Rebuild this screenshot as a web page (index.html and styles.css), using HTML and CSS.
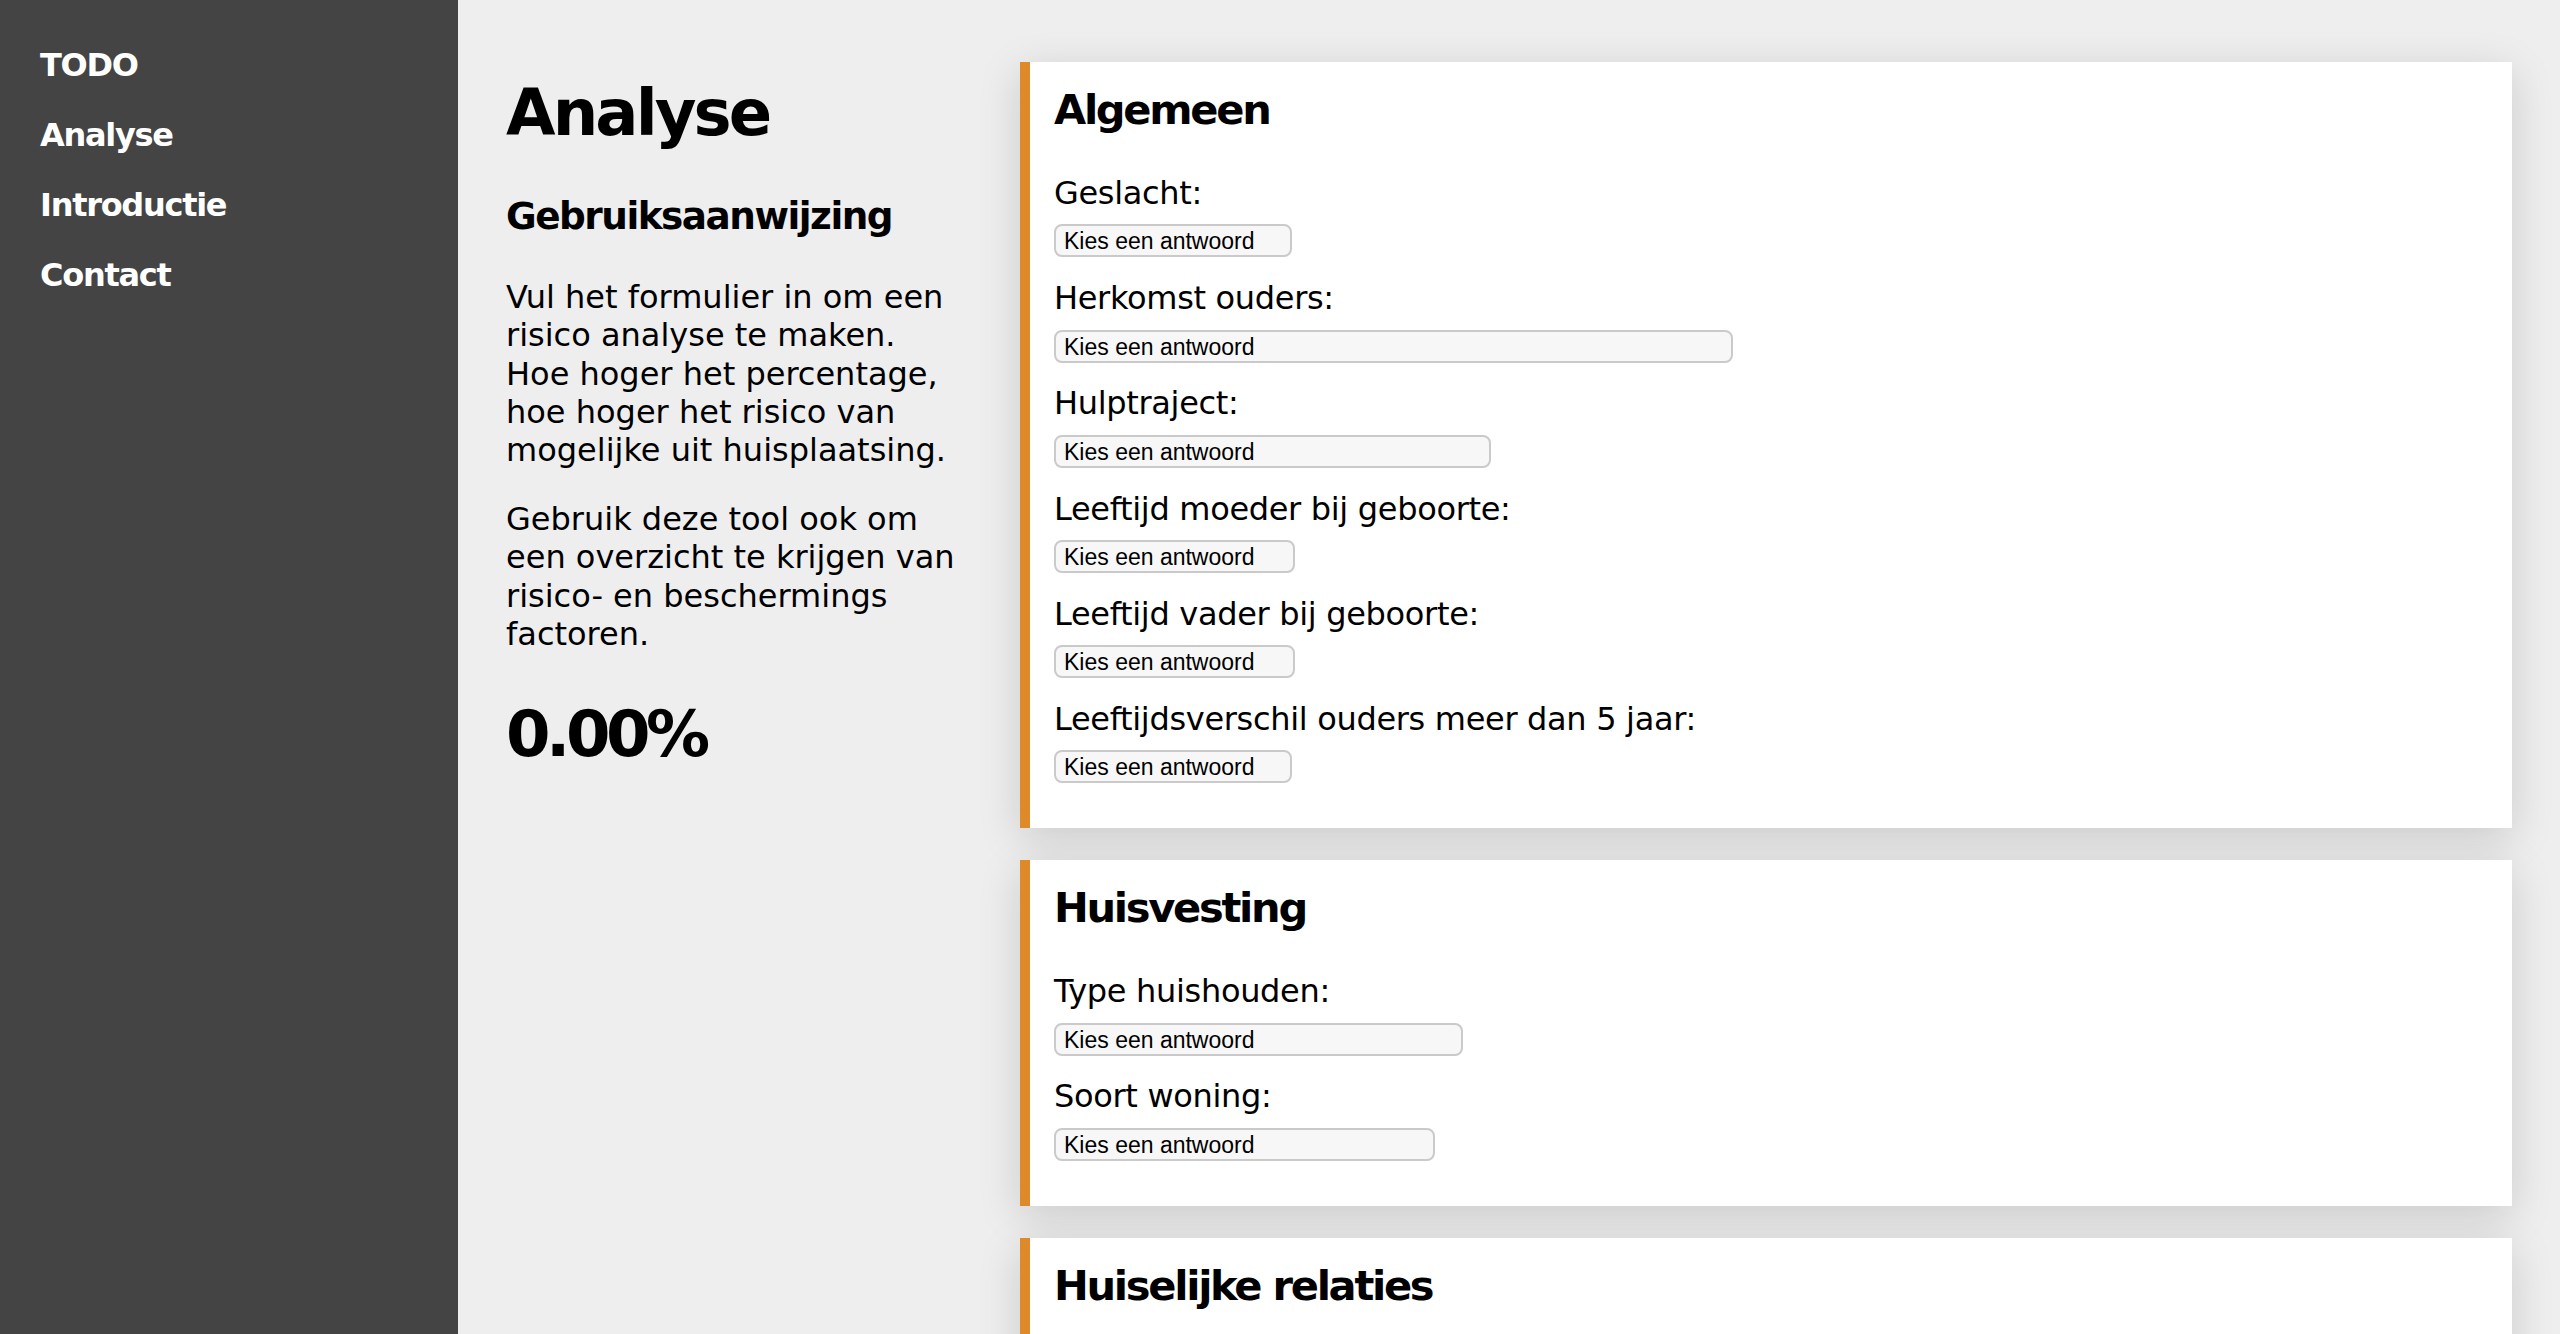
FILE: index.html
```html
<!DOCTYPE html>
<html lang="nl">
<head>
<meta charset="utf-8">
<title>Analyse</title>
<link rel="stylesheet" href="styles.css">
</head>
<body>
<div class="layout">
  <aside class="sidebar">
    <nav>
      <ul class="nav">
        <li><a href="#">TODO</a></li>
        <li><a href="#">Analyse</a></li>
        <li><a href="#">Introductie</a></li>
        <li><a href="#">Contact</a></li>
      </ul>
    </nav>
  </aside>
  <main class="main">
    <section class="intro">
      <h1 class="intro-title">Analyse</h1>
      <h3 class="intro-subtitle">Gebruiksaanwijzing</h3>
      <p class="intro-text">Vul het formulier in om een<br>risico analyse te maken.<br>Hoe hoger het percentage,<br>hoe hoger het risico van<br>mogelijke uit huisplaatsing.</p>
      <p class="intro-text">Gebruik deze tool ook om<br>een overzicht te krijgen van<br>risico- en beschermings<br>factoren.</p>
      <div class="score">0.00%</div>
    </section>
    <section class="cards">
      <form class="card">
        <h2 class="card-title">Algemeen</h2>
        <div class="field">
          <label class="field-label" for="geslacht">Geslacht:</label>
          <select class="field-select w-238" id="geslacht"><option>Kies een antwoord</option></select>
        </div>
        <div class="field">
          <label class="field-label" for="herkomst">Herkomst ouders:</label>
          <select class="field-select w-679" id="herkomst"><option>Kies een antwoord</option></select>
        </div>
        <div class="field">
          <label class="field-label" for="hulptraject">Hulptraject:</label>
          <select class="field-select w-437" id="hulptraject"><option>Kies een antwoord</option></select>
        </div>
        <div class="field">
          <label class="field-label" for="moeder">Leeftijd moeder bij geboorte:</label>
          <select class="field-select w-241" id="moeder"><option>Kies een antwoord</option></select>
        </div>
        <div class="field">
          <label class="field-label" for="vader">Leeftijd vader bij geboorte:</label>
          <select class="field-select w-241" id="vader"><option>Kies een antwoord</option></select>
        </div>
        <div class="field">
          <label class="field-label" for="verschil">Leeftijdsverschil ouders meer dan 5 jaar:</label>
          <select class="field-select w-238" id="verschil"><option>Kies een antwoord</option></select>
        </div>
      </form>
      <form class="card">
        <h2 class="card-title">Huisvesting</h2>
        <div class="field">
          <label class="field-label" for="huishouden">Type huishouden:</label>
          <select class="field-select w-409" id="huishouden"><option>Kies een antwoord</option></select>
        </div>
        <div class="field">
          <label class="field-label" for="woning">Soort woning:</label>
          <select class="field-select w-381" id="woning"><option>Kies een antwoord</option></select>
        </div>
      </form>
      <form class="card">
        <h2 class="card-title">Huiselijke relaties</h2>
      </form>
    </section>
  </main>
</div>
</body>
</html>
```

FILE: styles.css
```css
* {
  box-sizing: border-box;
}

html,
body {
  margin: 0;
  padding: 0;
}

body {
  font-family: "DejaVu Sans", "Open Sans", sans-serif;
  font-size: 32px;
  line-height: 38.4px;
  color: #000;
  background: #eeeeee;
}

.layout {
  display: grid;
  grid-template-columns: 458px 1fr;
  min-height: 100vh;
}

.sidebar {
  background: #444444;
  padding: 30px 0 0 40px;
}

.nav {
  list-style: none;
  margin: 0;
  padding: 0;
}

.nav a {
  display: block;
  color: #ffffff;
  text-decoration: none;
  font-weight: 700;
  font-size: 32px;
  line-height: 70px;
  letter-spacing: -0.04em;
}

.main {
  display: grid;
  grid-template-columns: 466px 1fr;
  column-gap: 48px;
  align-items: start;
  padding: 62px 48px 0 48px;
}

.intro {
  display: flex;
  flex-direction: column;
}

.intro-title {
  font-size: 64px;
  line-height: 76.8px;
  font-weight: 700;
  letter-spacing: -0.045em;
  margin: 12.5px 0 0;
}

.intro-subtitle {
  font-size: 37.4px;
  line-height: 44.88px;
  font-weight: 700;
  letter-spacing: -0.04em;
  margin: 42.4px 0 0;
}

.intro-text {
  margin: 39.2px 0 0;
}

.intro-text + .intro-text {
  margin-top: 30px;
}

.score {
  font-size: 64px;
  line-height: 76.8px;
  font-weight: 700;
  letter-spacing: -0.07em;
  margin: 42.1px 0 0;
}

.cards {
  display: flex;
  flex-direction: column;
  gap: 32px;
}

.card {
  background: #ffffff;
  border-left: 10px solid #df8a2a;
  padding: 23px 24px 45px;
  box-shadow: 0 10px 40px rgba(0, 0, 0, 0.15);
  margin: 0;
}

.card-title {
  font-size: 41.6px;
  line-height: 49.92px;
  font-weight: 700;
  letter-spacing: -0.055em;
  margin: 0 0 39px;
}

.field + .field {
  margin-top: 21.8px;
}

.field-label {
  display: block;
  line-height: 38.4px;
  margin-bottom: 12px;
  letter-spacing: -0.01em;
}

.field-select {
  display: block;
  -webkit-appearance: none;
  appearance: none;
  height: 33px;
  border: 2px solid #cacaca;
  border-radius: 8px;
  background: #f7f7f7;
  font-family: "Liberation Sans", Arial, sans-serif;
  font-size: 23px;
  padding: 1px 8px 0;
  color: #000;
  margin: 0;
}

.w-238 { width: 238px; }
.w-241 { width: 241px; }
.w-381 { width: 381px; }
.w-409 { width: 409px; }
.w-437 { width: 437px; }
.w-679 { width: 679px; }
```
